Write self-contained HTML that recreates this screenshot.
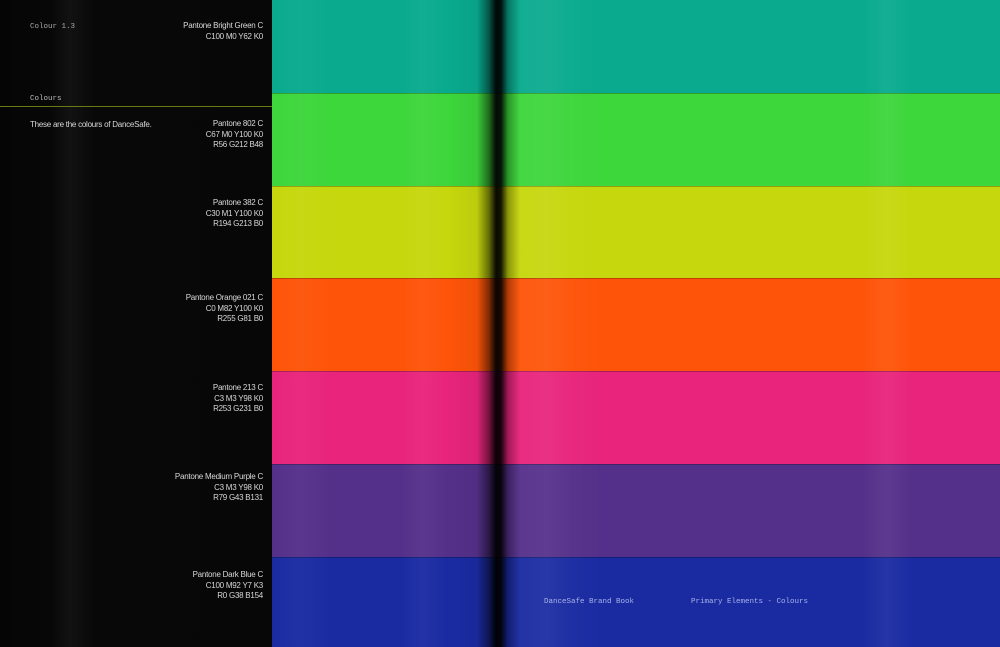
<!DOCTYPE html>
<html><head><style>
*{margin:0;padding:0;box-sizing:border-box}
body{width:1000px;height:647px;overflow:hidden;background:#050505;position:relative;font-family:"Liberation Sans",sans-serif}
.left{position:absolute;left:0;top:0;width:272px;height:647px;background:linear-gradient(90deg,#050505 0,#070707 50px,#121212 70px,#080808 95px,#070707 100%)}
.band{position:absolute;left:272px;width:728px;border-top:1px solid rgba(0,0,0,.25)}
.t{position:absolute;right:737px;text-align:right;color:#d8d8d8;font-size:8px;line-height:10.5px;letter-spacing:-0.25px}
.m{position:absolute;font-family:"Liberation Mono",monospace;font-size:7.5px;color:#aaa}
.ov{position:absolute;left:272px;top:0;width:728px;height:647px;background:linear-gradient(90deg,rgba(0,0,0,0) 0,rgba(255,255,255,.03) 28px,rgba(0,0,0,0) 60px,rgba(0,0,0,0) 130px,rgba(255,255,255,.04) 150px,rgba(0,0,0,0) 175px,rgba(0,0,0,.05) 205px,rgba(0,0,0,.5) 217px,rgba(0,0,0,.95) 224px,rgba(0,0,0,.9) 229px,rgba(0,0,0,.3) 236px,rgba(255,255,255,.04) 248px,rgba(255,255,255,.06) 275px,rgba(255,255,255,.02) 300px,rgba(0,0,0,0) 330px,rgba(0,0,0,0) 590px,rgba(255,255,255,.05) 615px,rgba(0,0,0,0) 640px,rgba(0,0,0,0) 100%)}
</style></head><body>
<div class="left"></div>
<div class="band" style="top:0;height:93px;background:#09aa8e;border:none"></div>
<div class="band" style="top:93px;height:93px;background:#3dd63b"></div>
<div class="band" style="top:186px;height:92px;background:#c6d70d"></div>
<div class="band" style="top:278px;height:93px;background:#fe5409"></div>
<div class="band" style="top:371px;height:93px;background:#e8247c"></div>
<div class="band" style="top:464px;height:93px;background:#55308a"></div>
<div class="band" style="top:557px;height:90px;background:#1a2ba2"></div>
<div class="ov"></div>
<div style="position:absolute;left:0;top:106px;width:272px;height:1px;background:#6a7a10"></div>
<div class="m" style="left:30px;top:23px">Colour 1.3</div>
<div class="m" style="left:30px;top:95px;color:#bbb">Colours</div>
<div style="position:absolute;left:30px;top:120px;font-size:8px;color:#d8d8d8;letter-spacing:-0.25px">These are the colours of DanceSafe.</div>
<div class="t" style="top:21px">Pantone Bright Green C<br>C100 M0 Y62 K0</div>
<div class="t" style="top:119px">Pantone 802 C<br>C67 M0 Y100 K0<br>R56 G212 B48</div>
<div class="t" style="top:198px">Pantone 382 C<br>C30 M1 Y100 K0<br>R194 G213 B0</div>
<div class="t" style="top:293px">Pantone Orange 021 C<br>C0 M82 Y100 K0<br>R255 G81 B0</div>
<div class="t" style="top:383px">Pantone 213 C<br>C3 M3 Y98 K0<br>R253 G231 B0</div>
<div class="t" style="top:472px">Pantone Medium Purple C<br>C3 M3 Y98 K0<br>R79 G43 B131</div>
<div class="t" style="top:570px">Pantone Dark Blue C<br>C100 M92 Y7 K3<br>R0 G38 B154</div>
<div class="m" style="left:544px;top:598px;color:#a8b4e8">DanceSafe Brand Book</div>
<div class="m" style="left:691px;top:598px;color:#a8b4e8">Primary Elements - Colours</div>
</body></html>
